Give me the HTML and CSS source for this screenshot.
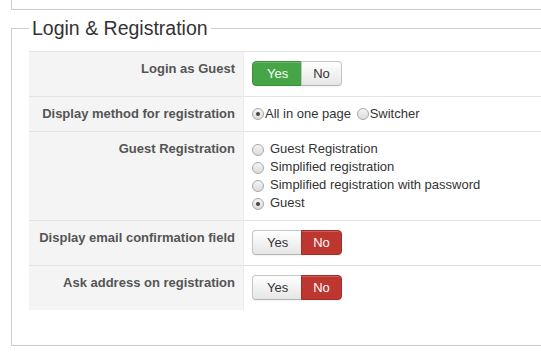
FILE: index.html
```html
<!DOCTYPE html>
<html lang="en">
<head>
    <meta charset="UTF-8">
    <title>Login &amp; Registration</title>
    <link rel="stylesheet" href="styles.css">
</head>
<body>
    <div class="page">
        <div class="prev-panel"></div>
        <fieldset class="panel">
            <legend>Login &amp; Registration</legend>
            <table class="options">
                <tr>
                    <th>Login as Guest</th>
                    <td>
                        <div class="toggle">
                            <span class="btn btn-yes">Yes</span>
                            <span class="btn">No</span>
                        </div>
                    </td>
                </tr>
                <tr>
                    <th>Display method for registration</th>
                    <td>
                        <label class="inline"><input type="radio" name="method" checked>All in one page</label>
                        <label class="inline"><input type="radio" name="method">Switcher</label>
                    </td>
                </tr>
                <tr>
                    <th>Guest Registration</th>
                    <td>
                        <label class="choice"><input type="radio" name="guest">Guest Registration</label>
                        <label class="choice"><input type="radio" name="guest">Simplified registration</label>
                        <label class="choice"><input type="radio" name="guest">Simplified registration with password</label>
                        <label class="choice"><input type="radio" name="guest" checked>Guest</label>
                    </td>
                </tr>
                <tr>
                    <th>Display email confirmation field</th>
                    <td>
                        <div class="toggle">
                            <span class="btn">Yes</span>
                            <span class="btn btn-no">No</span>
                        </div>
                    </td>
                </tr>
                <tr>
                    <th>Ask address on registration</th>
                    <td>
                        <div class="toggle">
                            <span class="btn">Yes</span>
                            <span class="btn btn-no">No</span>
                        </div>
                    </td>
                </tr>
            </table>
        </fieldset>
    </div>
</body>
</html>
```

FILE: styles.css
```css
html, body {
    margin: 0;
    overflow: hidden;
    background: #fff;
}
body {
    font-family: 'Liberation Sans', Arial, sans-serif;
    font-size: 13px;
    line-height: 18px;
    color: #333;
}
.page {
    width: 530px;
    padding-left: 11px;
}
.prev-panel {
    height: 9px;
    border-left: 1px solid #ccc;
    border-bottom: 1px solid #ccc;
}
.panel {
    margin: 0;
    padding: 5px 0 35px 17px;
    border: 1px solid #ccc;
    border-right: none;
    min-width: 0;
}
.panel legend {
    padding: 0 3px;
    font-size: 19.5px;
    line-height: 36px;
    color: #333;
}
.options {
    width: 100%;
    border-collapse: collapse;
    table-layout: fixed;
}
.options th,
.options td {
    border-top: 1px solid #e3e3e3;
}
.options th {
    width: 206px;
    padding: 8px 8px 8px 0;
    background: #f4f4f4;
    border-right: 1px solid #ececec;
    color: #555;
    font-weight: bold;
    text-align: right;
    vertical-align: top;
}
.options td {
    padding: 8px;
    vertical-align: top;
}
.toggle {
    display: flex;
    margin: 1px 0 2px;
}
.btn {
    display: inline-block;
    height: 23px;
    line-height: 23px;
    padding: 0 13px;
    border: 1px solid #c5c5c5;
    border-bottom-color: #b3b3b3;
    background: linear-gradient(#ffffff, #e6e6e6);
    color: #333;
    box-shadow: inset 0 1px 0 rgba(255,255,255,0.2), 0 1px 2px rgba(0,0,0,0.05);
}
.btn:first-child {
    padding: 0 13px 0 14px;
    border-radius: 4px 0 0 4px;
}
.btn + .btn {
    margin-left: -1px;
    padding: 0 11px;
    border-radius: 0 4px 4px 0;
}
.btn-yes {
    background: #46a546;
    border-color: #3d8f3d;
    color: #fff;
}
.btn-no {
    background: #bd362f;
    border-color: #a32d27;
    color: #fff;
}
input[type="radio"] {
    -webkit-appearance: none;
    appearance: none;
    box-sizing: border-box;
    width: 12px;
    height: 12px;
    margin: 0;
    border: 1px solid #a9a9a9;
    border-radius: 50%;
    background: linear-gradient(#f4f4f4, #dcdcdc);
    vertical-align: -2px;
    position: relative;
}
input[type="radio"]:checked::after {
    content: "";
    position: absolute;
    left: 3px;
    top: 3px;
    width: 4px;
    height: 4px;
    border-radius: 50%;
    background: #444;
}
.inline input[type="radio"] {
    margin-right: 1px;
}
.inline + .inline {
    margin-left: 2px;
}
.choice {
    display: block;
}
.choice input[type="radio"] {
    margin-right: 6px;
    vertical-align: -3px;
}
```
